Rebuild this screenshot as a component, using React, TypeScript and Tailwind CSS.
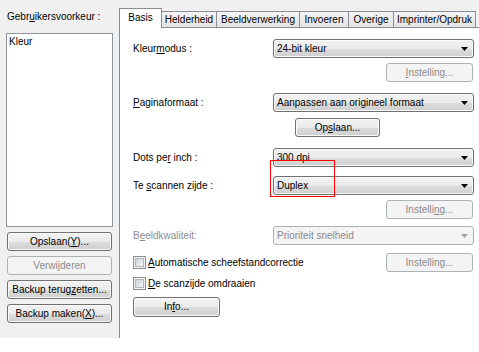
import React from "react";

const btnOn =
  "border-[#707070] bg-[linear-gradient(#f2f2f2_0%,#ebebeb_50%,#dddddd_51%,#cfcfcf_100%)] shadow-[inset_0_0_0_1px_#fbfbfb] text-black";
const btnOff = "border-[#adb2b5] bg-[#f4f4f4] text-[#8a8a8a]";

function Btn({
  children,
  disabled,
  className = "",
}: {
  children: React.ReactNode;
  disabled?: boolean;
  className?: string;
}) {
  return (
    <div
      className={`flex shrink-0 items-center justify-center rounded-[3px] border leading-[12px] ${
        disabled ? btnOff : btnOn
      } ${className}`}
    >
      {children}
    </div>
  );
}

function Arrow({ disabled }: { disabled?: boolean }) {
  return (
    <svg width="7" height="4" viewBox="0 0 7 4" className="shrink-0">
      <path d="M0 0H7L3.5 4Z" fill={disabled ? "#a3a3a3" : "#000"} />
    </svg>
  );
}

function Combo({ value, disabled }: { value: string; disabled?: boolean }) {
  return (
    <div
      className={`flex h-[19px] w-[201px] shrink-0 items-center justify-between rounded-[3px] border pl-[3px] pr-[5px] leading-[12px] ${
        disabled ? btnOff : btnOn
      }`}
    >
      <span>{value}</span>
      <Arrow disabled={disabled} />
    </div>
  );
}

function Row({
  label,
  children,
  className = "",
  disabled,
}: {
  label: React.ReactNode;
  children: React.ReactNode;
  className?: string;
  disabled?: boolean;
}) {
  return (
    <div className={`flex items-center ${className}`}>
      <div
        className={`w-[153px] shrink-0 pl-[13px] leading-[12px] ${
          disabled ? "text-[#8d8d8d]" : "text-black"
        }`}
      >
        {label}
      </div>
      {children}
    </div>
  );
}

function Check({ children, className = "" }: { children: React.ReactNode; className?: string }) {
  return (
    <div className={`flex items-center gap-[2px] ${className}`}>
      <div className="flex h-[13px] w-[13px] shrink-0 items-center justify-center border border-[#8e8f8f] bg-[#f4f4f4]">
        <div className="h-[9px] w-[9px] border border-[#b3b7bc] bg-[linear-gradient(135deg,#cdd1d6_0%,#e6e7e9_60%,#f6f6f6_100%)]" />
      </div>
      <span className="leading-[12px]">{children}</span>
    </div>
  );
}

const U = ({ children }: { children: React.ReactNode }) => (
  <span className="underline underline-offset-[1px]">{children}</span>
);

function Tab({ label, selected, w }: { label: string; selected?: boolean; w: string }) {
  if (selected)
    return (
      <div
        className={`relative z-10 -mb-px flex h-[20px] shrink-0 items-start justify-center border border-b-0 border-[#898c95] bg-white pt-[3px] leading-[12px] ${w}`}
      >
        {label}
      </div>
    );
  return (
    <div
      className={`-ml-px flex h-[16px] shrink-0 items-start justify-center border border-b-0 border-[#898c95] bg-[linear-gradient(#f4f4f4,#e4e4e4)] pt-[2px] leading-[12px] ${w}`}
    >
      {label}
    </div>
  );
}

export default function App() {
  return (
    <div className="h-[352px] w-[479px] overflow-hidden bg-white font-['Liberation_Sans',Arial,sans-serif] text-[10px] text-black">
      <div className="flex h-[338px] bg-[#f0f0f0]">
        {/* Left column */}
        <div className="flex w-[119px] shrink-0 flex-col">
          <div className="mt-[11px] pl-[7px] leading-[12px]">
            Gebr<U>u</U>ikersvoorkeur :
          </div>
          <div className="ml-[6px] mt-[10px] h-[194px] w-[107px] border border-[#8f959e] bg-white pl-[2px] pt-[2px] leading-[12px]">
            Kleur
          </div>
          <div className="ml-[7px] mt-[5px] flex flex-col gap-[5px]">
            <Btn className="h-[19px] w-[105px]">
              <span>
                Opslaan(<U>Y</U>)...
              </span>
            </Btn>
            <Btn className="h-[19px] w-[105px]" disabled>
              Verwijderen
            </Btn>
            <Btn className="h-[19px] w-[105px]">
              <span>
                Backup terug<U>z</U>etten...
              </span>
            </Btn>
            <Btn className="h-[19px] w-[105px]">
              <span>
                Backup maken(<U>X</U>)...
              </span>
            </Btn>
          </div>
        </div>

        {/* Right: tab control */}
        <div className="flex min-w-0 flex-1 flex-col">
          <div className="flex h-[27px] items-end">
            <Tab label="Basis" selected w="w-[43px]" />
            <Tab label="Helderheid" w="w-[56px]" />
            <Tab label="Beeldverwerking" w="w-[84px]" />
            <Tab label="Invoeren" w="w-[50px]" />
            <Tab label="Overige" w="w-[46px]" />
            <Tab label="Imprinter/Opdruk" w="w-[83px]" />
          </div>
          <div className="relative flex flex-1 flex-col border-l border-t border-[#898c95] bg-white">
            <Row label={<>Kleur<U>m</U>odus :</>} className="mt-[11px]">
              <Combo value="24-bit kleur" />
            </Row>
            <Btn disabled className="ml-[266px] mt-[5px] h-[19px] w-[87px]">
              <span>
                <U>I</U>nstelling...
              </span>
            </Btn>
            <Row label={<><U>P</U>aginaformaat :</>} className="mt-[11px]">
              <Combo value="Aanpassen aan origineel formaat" />
            </Row>
            <Btn className="ml-[175px] mt-[6px] h-[19px] w-[85px]">
              <span>
                Op<U>s</U>laan...
              </span>
            </Btn>
            <Row label={<>Dots pe<U>r</U> inch :</>} className="mt-[11px]">
              <Combo value="300 dpi" />
            </Row>
            <Row label={<>Te <U>s</U>cannen zijde :</>} className="mt-[9px]">
              <Combo value="Duplex" />
            </Row>
            <Btn disabled className="ml-[266px] mt-[5px] h-[19px] w-[87px]">
              <span>
                Instelli<U>n</U>g...
              </span>
            </Btn>
            <Row label={<>B<U>e</U>eldkwaliteit:</>} className="mt-[7px]" disabled>
              <Combo value="Prioriteit snelheid" disabled />
            </Row>
            <div className="mt-[8px] flex items-center justify-between pl-[13px] pr-[6px]">
              <Check>
                <U>A</U>utomatische scheefstandcorrectie
              </Check>
              <Btn disabled className="h-[19px] w-[87px]">
                Instelling...
              </Btn>
            </div>
            <Check className="ml-[13px] mt-[5px]">
              <U>D</U>e scanzijde omdraaien
            </Check>
            <Btn className="ml-[13px] mt-[7px] h-[20px] w-[87px]">
              <span>
                In<U>f</U>o...
              </span>
            </Btn>

            {/* red annotation */}
            <div className="pointer-events-none absolute left-[150px] top-[132px] h-[37px] w-[65px] border border-[#ff0000]" />
          </div>
        </div>
      </div>
    </div>
  );
}
